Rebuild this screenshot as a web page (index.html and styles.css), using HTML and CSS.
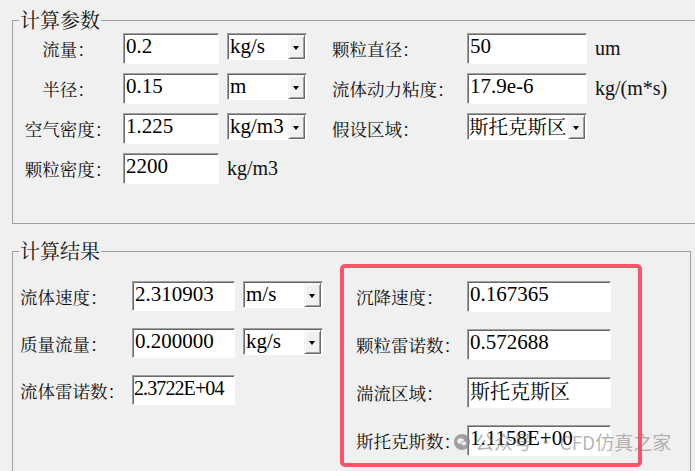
FILE: index.html
```html
<!DOCTYPE html>
<html lang="zh-CN">
<head>
    <meta charset="UTF-8">
    <title>计算参数</title>
    <link rel="stylesheet" href="styles.css">
</head>
<body>
    <fieldset class="group group-params">
        <legend>计算参数</legend>
        <div class="params">
            <label class="lbl center">流量：</label>
            <input class="field w96" type="text" value="0.2">
            <div class="combo w80"><span class="combo-text">kg/s</span><span class="combo-btn"></span></div>
            <label class="lbl">颗粒直径：</label>
            <input class="field w120" type="text" value="50">
            <span class="unit">um</span>

            <label class="lbl center">半径：</label>
            <input class="field w96" type="text" value="0.15">
            <div class="combo w80"><span class="combo-text">m</span><span class="combo-btn"></span></div>
            <label class="lbl">流体动力粘度：</label>
            <input class="field w120" type="text" value="17.9e-6">
            <span class="unit">kg/(m*s)</span>

            <label class="lbl center">空气密度：</label>
            <input class="field w96" type="text" value="1.225">
            <div class="combo w80"><span class="combo-text">kg/m3</span><span class="combo-btn"></span></div>
            <label class="lbl">假设区域：</label>
            <div class="combo w120"><span class="combo-text cn">斯托克斯区</span><span class="combo-btn"></span></div>
            <span></span>

            <label class="lbl center">颗粒密度：</label>
            <input class="field w96" type="text" value="2200">
            <span class="unit">kg/m3</span>
        </div>
    </fieldset>

    <fieldset class="group group-result">
        <legend>计算结果</legend>
        <div class="results">
            <div class="result-left">
                <label class="lbl">流体速度：</label>
                <input class="field w103" type="text" value="2.310903">
                <div class="combo w80"><span class="combo-text">m/s</span><span class="combo-btn"></span></div>

                <label class="lbl">质量流量：</label>
                <input class="field w103" type="text" value="0.200000">
                <div class="combo w80"><span class="combo-text">kg/s</span><span class="combo-btn"></span></div>

                <label class="lbl">流体雷诺数：</label>
                <input class="field w103 tight" type="text" value="2.3722E+04">
            </div>
            <div class="highlight">
                <label class="lbl">沉降速度：</label>
                <input class="field w144" type="text" value="0.167365">

                <label class="lbl">颗粒雷诺数：</label>
                <input class="field w144" type="text" value="0.572688">

                <label class="lbl">湍流区域：</label>
                <input class="field w144 cn" type="text" value="斯托克斯区">

                <label class="lbl">斯托克斯数：</label>
                <input class="field w144" type="text" value="1.1158E+00">
            </div>
        </div>
    </fieldset>

    <div class="watermark">
        <svg class="wm-icon" width="16" height="16" viewBox="0 0 16 16">
            <circle cx="8" cy="8" r="8" fill="#8c8c8c"/>
            <ellipse cx="6.6" cy="7" rx="3.4" ry="2.8" fill="#f0f0f0"/>
            <ellipse cx="9.8" cy="9.4" rx="2.8" ry="2.3" fill="#f0f0f0" stroke="#8c8c8c" stroke-width="0.8"/>
        </svg>
        <span>公众号 · CFD仿真之家</span>
    </div>
</body>
</html>
```

FILE: styles.css
```css
html, body {
    overflow: hidden;
}
body {
    margin: 0;
    width: 695px;
    height: 471px;
    background-color: #f0f0f0;
    position: relative;
    font-family: "Noto Serif CJK SC", "Noto Sans CJK SC", serif;
    color: #000;
}
.group {
    margin: 0;
    border: 1px solid #a0a0a0;
    padding: 0 0 0 7px;
    box-sizing: border-box;
}
.group legend {
    font-size: 20px;
    line-height: 24px;
    padding: 0 1px;
    margin-left: -1px;
    color: #111;
}
.group-params {
    margin: 8px 0 0 12px;
    width: 700px;
    padding-top: 1px;
    padding-bottom: 39px;
}
.group-result {
    margin: 15px 0 0 12px;
    width: 679px;
    padding-bottom: 40px;
}
.params {
    display: grid;
    grid-template-columns: 103px 104px 105px 135px 128px auto;
    grid-auto-rows: 31px;
    row-gap: 9px;
    align-items: center;
}
.lbl {
    font-size: 17.5px;
    white-space: nowrap;
    color: #111;
}
.lbl.center {
    text-align: center;
    padding-right: 6px;
}
.field {
    box-sizing: border-box;
    height: 31px;
    margin: 0;
    padding: 0 2px 4px 2px;
    border: 1px solid;
    border-color: #a0a0a0 #fff #fff #a0a0a0;
    box-shadow: inset 1px 1px 0 #696969;
    background-color: #fff;
    font-family: "Liberation Serif", "Noto Serif CJK SC", "Noto Sans CJK SC", serif;
    font-size: 21px;
    color: #000;
    outline: none;
}
.field.cn {
    font-size: 20px;
    font-family: "Noto Serif CJK SC", "Noto Sans CJK SC", serif;
}
.field.tight {
    padding-left: 1px;
    padding-right: 0;
    font-size: 20px;
    letter-spacing: -0.9px;
}
.w96 { width: 96px; }
.w80 { width: 80px; }
.w103 { width: 103px; }
.w120 { width: 120px; }
.w144 { width: 144px; }
.combo {
    box-sizing: border-box;
    height: 27px;
    align-self: start;
    display: flex;
    border: 1px solid;
    border-color: #a0a0a0 #fff #fff #a0a0a0;
    box-shadow: inset 1px 1px 0 #696969;
    background-color: #fff;
    padding: 1px 1px 0 1px;
}
.combo-text {
    flex: 1;
    white-space: nowrap;
    padding-left: 1px;
    font-family: "Liberation Serif", serif;
    font-size: 21px;
    line-height: 22px;
}
.combo-text.cn {
    font-family: "Noto Serif CJK SC", "Noto Sans CJK SC", serif;
    font-size: 19.5px;
    padding-left: 0;
}
.combo-btn {
    width: 17px;
    flex-shrink: 0;
    box-sizing: border-box;
    background-color: #f0f0f0;
    border: 1px solid;
    border-color: #f0f0f0 #696969 #696969 #f0f0f0;
    box-shadow: inset 1px 1px 0 #fff, inset -1px -1px 0 #a0a0a0;
    position: relative;
}
.combo-btn::after {
    content: "";
    position: absolute;
    left: 4px;
    top: 10px;
    border-left: 3.5px solid transparent;
    border-right: 3.5px solid transparent;
    border-top: 4px solid #000;
}
.unit {
    font-family: "Liberation Serif", serif;
    font-size: 20px;
    color: #111;
}
.results {
    display: flex;
    align-items: flex-start;
}
.result-left {
    margin-top: 18px;
    display: grid;
    grid-template-columns: 112px 111px auto;
    grid-auto-rows: 30px;
    row-gap: 17px;
    align-items: center;
}
.result-left .field {
    height: 30px;
}
.highlight {
    margin: 1px 0 0 17px;
    width: 302px;
    box-sizing: border-box;
    border: 4px solid #fb5468;
    border-radius: 5px;
    padding: 13px 0 7px 12px;
    display: grid;
    grid-template-columns: 111px auto;
    grid-auto-rows: 31px;
    row-gap: 17px;
    align-items: center;
}
.watermark {
    position: absolute;
    left: 454px;
    top: 428px;
    display: flex;
    align-items: center;
    gap: 5px;
    font-family: "Noto Sans CJK SC", sans-serif;
    font-size: 19px;
    color: rgba(120, 120, 120, 0.55);
    white-space: nowrap;
}
.wm-icon {
    opacity: 0.8;
}
```
